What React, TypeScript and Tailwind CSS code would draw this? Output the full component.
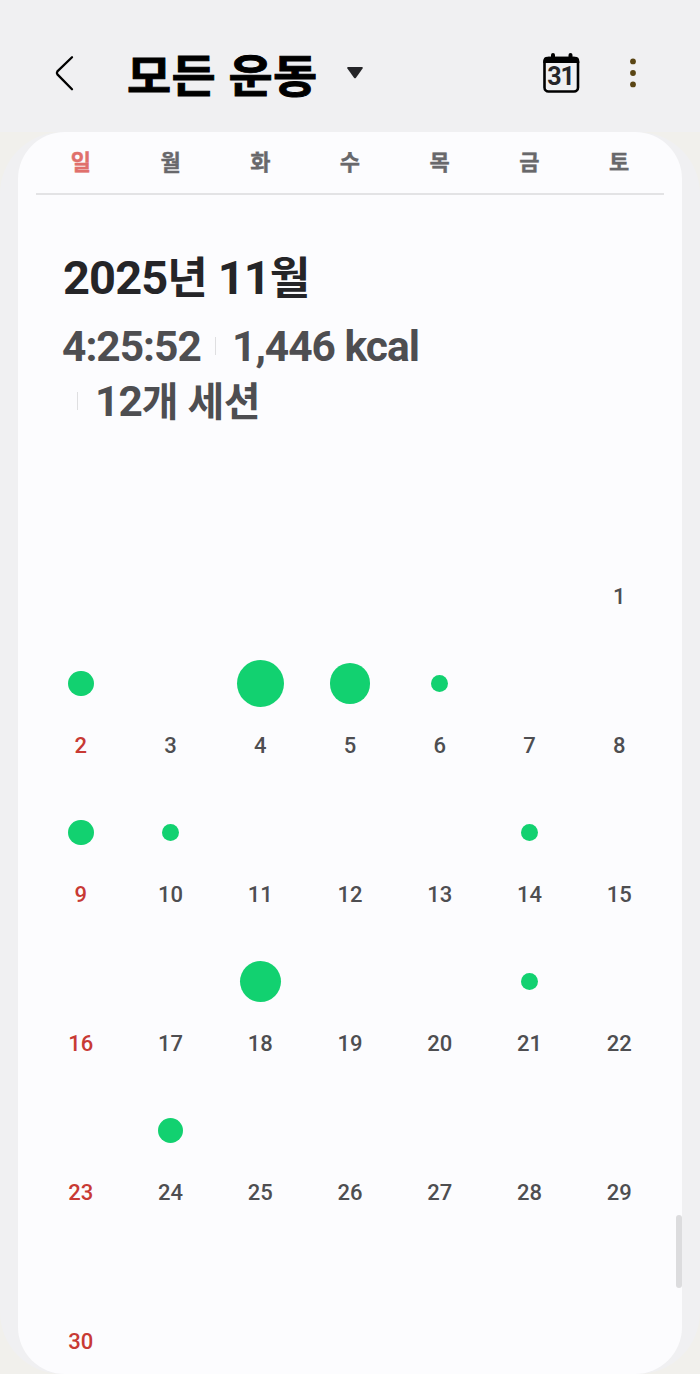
import React from 'react';

interface DayCell {
  day: number;
  dot?: number; // diameter in px
}

const WEEKDAYS = ['일', '월', '화', '수', '목', '금', '토'];

const DOTS: Record<number, number> = {
  2: 25.5,
  4: 47.5,
  5: 40.5,
  6: 16.5,
  9: 25.5,
  10: 16.5,
  14: 16.5,
  18: 40.5,
  21: 16.5,
  24: 25.5,
};

const FIRST_WEEKDAY = 6;
const DAYS_IN_MONTH = 30;

function buildWeeks(): (DayCell | null)[][] {
  const cells: (DayCell | null)[] = Array(FIRST_WEEKDAY).fill(null);
  for (let day = 1; day <= DAYS_IN_MONTH; day++) {
    cells.push({ day, dot: DOTS[day] });
  }
  const weeks: (DayCell | null)[][] = [];
  for (let i = 0; i < cells.length; i += 7) {
    const week = cells.slice(i, i + 7);
    while (week.length < 7) week.push(null);
    weeks.push(week);
  }
  return weeks;
}

function Header() {
  return (
    <header className="flex h-[132px] items-center pt-[14px] pl-[54px]">
      <button aria-label="뒤로" className="flex h-10 w-[22px] items-center">
        <svg width="22" height="40" viewBox="0 0 22 40" fill="none" stroke="#000" strokeWidth="2.3" strokeLinecap="round" strokeLinejoin="round">
          <path d="M18 4.2 L3.4 18.4 Q2.4 20 3.4 21.4 L18 36.2" />
        </svg>
      </button>
      <h1 className="ml-[51px] w-[192px] scale-y-[0.94] pt-[9px] text-[48px] leading-[60px] font-bold tracking-[0.4px] whitespace-nowrap text-black [-webkit-text-stroke:1px_#000]">
        모든 운동
      </h1>
      <svg className="ml-[27px]" width="18" height="14" viewBox="0 0 18 14" fill="#252528">
        <path d="M2 1 H16 Q17.4 1.2 16.6 2.4 L10 11.7 Q9 13 8 11.7 L1.4 2.4 Q.6 1.2 2 1Z" />
      </svg>
      <button aria-label="오늘" className="ml-[179px]">
        <svg width="37" height="42" viewBox="0 0 37 42">
          <path d="M8 7 V3 a2 2 0 0 1 4 0 V7 M25.5 7 V3 a2 2 0 0 1 4 0 V7" fill="#000" />
          <rect x="1.5" y="6" width="33.5" height="33.5" rx="4" fill="none" stroke="#000" strokeWidth="2.6" />
          <path d="M.3 11 V9 Q.3 4.7 4.5 4.7 H32 Q36.3 4.7 36.3 9 V11Z" fill="#000" />
          <text x="17.6" y="32.6" textAnchor="middle" fontSize="25" fontWeight="700" letterSpacing="-0.9" fill="#252528">31</text>
        </svg>
      </button>
      <button aria-label="더보기" className="ml-[49px]">
        <svg width="8" height="32" viewBox="0 0 8 32" fill="#5a4514">
          <circle cx="4" cy="4.4" r="2.9" />
          <circle cx="4" cy="16" r="2.9" />
          <circle cx="4" cy="27.4" r="2.9" />
        </svg>
      </button>
    </header>
  );
}

function Summary() {
  return (
    <section className="flex h-[277px] flex-col pt-[53px] pl-[27px]">
      <h2 className="h-[60px] text-[47px] leading-[60px] font-bold tracking-[-0.9px] whitespace-nowrap text-[#252528]">
        2025<span className="text-[44px] leading-none">년</span> 11<span className="text-[44px] leading-none">월</span>
      </h2>
      <div className="mt-[11px] -ml-px text-[42.5px] leading-[55px] font-bold tracking-[-1px] text-[#4e4e51]">
        <div className="flex h-[55px] items-center whitespace-nowrap">
          <span className="w-[139px]">4:25:52</span>
          <span className="mr-[16px] ml-[14px] h-[18px] w-px -translate-y-px bg-[#dfdfe1]" />
          <span>1,446 kcal</span>
        </div>
        <div className="flex h-[55px] items-center whitespace-nowrap">
          <span className="mr-[17px] ml-[15px] h-[18px] w-px -translate-y-px bg-[#dfdfe1]" />
          <span>
            12<span className="text-[40px] leading-none tracking-[-0.5px]">개 세션</span>
          </span>
        </div>
      </div>
    </section>
  );
}

function Day({ cell, sunday }: { cell: DayCell | null; sunday: boolean }) {
  return (
    <div className="flex h-[149px] flex-col items-center">
      <div className="flex h-[125px] w-full items-center justify-center">
        {cell?.dot && <span className="rounded-full bg-[#12d170]" style={{ width: cell.dot, height: cell.dot }} />}
      </div>
      <span className={`-mt-[14px] text-[22px] leading-[28px] font-medium ${sunday ? 'text-[#c83a34]' : 'text-[#4e4e51]'}`}>
        {cell?.day}
      </span>
    </div>
  );
}

export default function App() {
  const weeks = buildWeeks();

  return (
    <div className="h-[1374px] w-[700px] overflow-hidden bg-[#f0f0f2] font-['Roboto','Noto_Sans_CJK_KR',sans-serif]">
      <Header />
      <main className="h-[1242px] bg-[#f1f0ec]">
        <div className="h-full rounded-[62px] bg-[#f0f0f2] px-[18px]">
          <div className="relative h-full overflow-hidden rounded-[47px] bg-[#fcfcfe] px-[18px]">
            <div className="grid h-[63px] grid-cols-7 items-center border-b-2 border-[#e3e3e5] text-center text-[22px] font-bold text-[#68686b] [-webkit-text-stroke:0.4px_currentColor]">
              {WEEKDAYS.map((name, i) => (
                <span key={name} className={i === 0 ? 'text-[#e0706c]' : ''}>
                  {name}
                </span>
              ))}
            </div>
            <Summary />
            {weeks.map((week, w) => (
              <div key={w} className="grid grid-cols-7">
                {week.map((cell, i) => (
                  <Day key={i} cell={cell} sunday={i === 0} />
                ))}
              </div>
            ))}
            {/* scroll thumb */}
            <span className="absolute top-[1083px] right-0 h-[73px] w-[6px] rounded-full bg-[#dcdcde]" />
          </div>
        </div>
      </main>
    </div>
  );
}
